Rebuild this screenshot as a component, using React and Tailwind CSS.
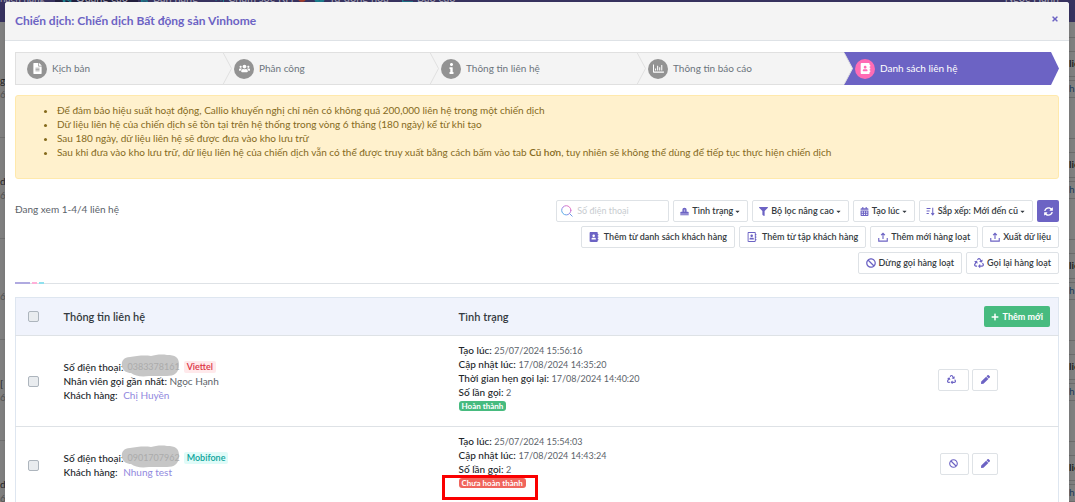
import React from 'react';
import clsx from 'clsx';
import {
    FaFileAlt, FaUsers, FaInfo, FaRegChartBar, FaAddressBook, FaRegAddressBook,
    FaFilter, FaCalendarAlt, FaSyncAlt, FaBan, FaRecycle, FaPen, FaPlus, FaTimes, FaCaretDown,
    FaBullhorn, FaShoppingCart, FaHeadset, FaCog, FaChartLine,
} from 'react-icons/fa';

const StampIcon = (props) => (
    <svg viewBox="0 0 16 16" width="1em" height="1em" fill="currentColor" {...props}>
        <path d="M8 1.500C5.800 1.500 4.300 2.800 4.300 5v3.500H2A1.500 1.500 0 0 0 .5 10v2h15v-2A1.500 1.500 0 0 0 14 8.500h-2.300V5C11.700 2.800 10.200 1.500 8 1.500zM.5 13h15v1.500H.5z" />
        <path d="M6.800 4.500h2.400v4H6.800z" fill="#fff" opacity=".5" />
    </svg>
);

const SortIcon = (props) => (
    <svg viewBox="0 0 16 16" width="1em" height="1em" fill="none" stroke="currentColor" strokeWidth="1.8" {...props}>
        <path d="M1 2.500h7M1 7h5.500M1 11.500h4M12 1.500v12M9.500 11L12 14l2.500-3" />
    </svg>
);

const TrayIcon = (props) => (
    <svg viewBox="0 0 16 16" width="1em" height="1em" fill="none" stroke="currentColor" strokeWidth="1.8" {...props}>
        <path d="M1.200 9.500v5h13.600v-5M8 11V2M5 5l3-3 3 3" />
    </svg>
);

const SearchIcon = (props) => (
    <svg viewBox="0 0 12 12" width="12" height="12" fill="none" strokeLinecap="round" {...props}>
        <defs>
            <linearGradient id="searchStroke" x1="1" y1="0" x2="0" y2="1">
                <stop offset="0" stopColor="#ff6fb7" />
                <stop offset=".5" stopColor="#a77be0" />
                <stop offset="1" stopColor="#2fc1ea" />
            </linearGradient>
        </defs>
        <circle cx="5.3" cy="5.3" r="4.6" stroke="url(#searchStroke)" />
        <path d="M8.800 8.800L11.200 11.200" stroke="#6f9be6" />
    </svg>
);

const steps = [
    { label: 'Kịch bản', icon: FaFileAlt },
    { label: 'Phân công', icon: FaUsers },
    { label: 'Thông tin liên hệ', icon: FaInfo },
    { label: 'Thông tin báo cáo', icon: FaRegChartBar },
    { label: 'Danh sách liên hệ', icon: FaAddressBook, active: true },
];

const contacts = [
    {
        id: 1,
        phone: '0383378161',
        network: 'Viettel',
        networkClass: 'bg-[#ffe9eb] text-[#dc3545]',
        agent: 'Ngọc Hạnh',
        customer: 'Chị Huyền',
        times: [
            ['Tạo lúc:', '25/07/2024 15:56:16'],
            ['Cập nhật lúc:', '17/08/2024 14:35:20'],
            ['Thời gian hẹn gọi lại:', '17/08/2024 14:40:20'],
            ['Số lần gọi:', '2'],
        ],
        done: true,
    },
    {
        id: 2,
        phone: '0901707962',
        network: 'Mobifone',
        networkClass: 'bg-[#e0fbf8] text-[#0ba39b]',
        customer: 'Nhung test',
        times: [
            ['Tạo lúc:', '25/07/2024 15:54:03'],
            ['Cập nhật lúc:', '17/08/2024 14:43:24'],
            ['Số lần gọi:', '2'],
        ],
        done: false,
    },
];

const Backdrop = () => (
    <div className="flex h-screen flex-col overflow-hidden bg-[#808080] text-[10px] text-[#222]" aria-hidden="true">
        <div className="flex h-[22px] shrink-0 items-start justify-between overflow-hidden bg-[#37325f] text-[11px] leading-3 text-[#a5a3b5]">
            <div className="-mt-[8px] flex whitespace-nowrap">
                <span className="w-[55px] text-[10px]">hách hàng</span>
                <span className="flex w-[83px] items-center gap-1 bg-[#221f3d] pl-1.5"><FaBullhorn className="text-[#1c7d8c]" />Quảng cáo</span>
                <span className="flex w-[75px] items-center gap-1"><FaShoppingCart className="text-[#1c7d8c]" />Bán hàng</span>
                <span className="flex w-[101px] items-center gap-1"><FaHeadset className="text-[#1c7d8c]" />Chăm sóc KH <i className="size-2 rounded-full bg-[#a03c2c]" /></span>
                <span className="flex w-[88px] items-center gap-1"><FaCog className="text-[#1c7d8c]" />Tự động hóa</span>
                <span className="flex items-center gap-1"><FaChartLine className="text-[#1c7d8c]" />Báo cáo</span>
            </div>
            <span className="-mt-[8px] mr-4">Ngọc Hạnh</span>
        </div>
        <div className="flex justify-between">
            <div className="w-[5px] overflow-hidden pt-[15px]">
                {['g', 'd', '', '[', 'd'].map((letter, i) => (
                    <div key={i} className="flex h-[101px] flex-col justify-center border-b border-[#707070] leading-[14px]">
                        <span className="h-[14px]">{letter}</span>
                        <span className="text-[#555]">6</span>
                    </div>
                ))}
            </div>
            <div className="w-[6px] overflow-hidden">
                {[0, 1, 2, 3, 4].map(i => (
                    <div key={i} className="h-[101px] pt-[15px]">
                        <div className="h-[15px] border-y border-[#6c6c6c]" />
                        <div className="h-[25px] border-b border-[#6c6c6c] pt-1 font-bold leading-[14px]">liê</div>
                        <div className="mt-[3px] h-[18px] border-y border-[#6c6c6c] leading-[14px] text-[#1f3a5c]">h</div>
                    </div>
                ))}
            </div>
        </div>
    </div>
);

const Step = ({ step }) => {
    const Icon = step.icon;
    return (
        <li className={clsx('relative h-[33px]', step.active ? 'grow basis-[8px]' : 'grow basis-0')}>
            <a
                href="#"
                className={clsx(
                    'flex h-full items-center gap-[5px] pl-[11px]',
                    step.active
                        ? 'bg-[#6c63c4] text-white [clip-path:polygon(0_0,calc(100%-8px)_0,100%_50%,calc(100%-8px)_100%,0_100%)]'
                        : 'border-y border-[#e0e0e0] bg-[#f4f4f4] text-[#6c757d]',
                )}
            >
                <span className={clsx('flex size-5 items-center justify-center rounded-full text-[11px] text-white', step.active ? 'bg-[#ff6cb5]' : 'bg-[#939393]')}>
                    <Icon />
                </span>
                <span className="pb-[2px]">{step.label}</span>
            </a>
            {!step.active && (
                <svg viewBox="0 0 9 33" width="9" height="33" fill="#f4f4f4" stroke="#e0e0e0" className="absolute -right-[9px] top-0 z-10">
                    <path d="M0 0.500L8.500 16.500L0 32.500" />
                </svg>
            )}
        </li>
    );
};

const Btn = ({ icon: Icon, children, caret, wide }) => (
    <button
        type="button"
        className={clsx(
            'flex h-[22px] items-center rounded-[2px] border border-[#dee2e6] bg-white text-[9px] font-semibold text-[#343a40]',
            wide ? 'gap-[5px] px-[7px]' : caret ? 'gap-[3px] px-[6px]' : 'gap-[3px] px-[7px]',
        )}
    >
        <Icon className={clsx('text-[#6c63c4]', caret ? 'size-[9px]' : 'size-[10px]')} />
        <span>{children}</span>
        {caret && <FaCaretDown className="-ml-[2px] size-[7px]" />}
    </button>
);

const Check = ({ label }) => (
    <input type="checkbox" aria-label={label} className="block size-[11px] appearance-none rounded-[2px] border border-[#adb5bd] bg-[#e9ecef] checked:bg-[#6c63c4]" />
);

const IconBtn = ({ icon: Icon, label, className }) => (
    <button type="button" aria-label={label} className={clsx('flex h-[22px] items-center rounded-[2px] border border-[#dee2e6] bg-white pl-[8px]', className)}>
        <Icon className="size-[9px] text-[#6c63c4]" />
    </button>
);

const Phone = ({ children }) => (
    <span className="relative inline-block px-[4px] text-[9px] text-[#ababab]">
        <svg viewBox="0 0 60 24" width="60" height="24" className="absolute -left-[2px] -top-[6px]">
            <path d="M9 3C3 3 0 7 1 12c1 5 5 7 9 7 4 3 10 4 18 3h18c7 0 12-3 12-11S54 1 46 1c-6-1-12 0-16 1C23 1 15 2 9 3z" fill="#c6c6c6" />
        </svg>
        <span className="relative">{children}</span>
    </span>
);

const Term = ({ children }) => <b className="font-medium text-[#212529]">{children}</b>;

const ContactRow = ({ contact }) => (
    <tr className="border-b border-[#dee2e6]">
        <td className="pl-3"><Check label={`Chọn ${contact.customer}`} /></td>
        <td className="pb-px">
            <div className="flex h-[14px] items-center">
                <Term>Số điện thoại:</Term>
                <Phone>{contact.phone}</Phone>
                <span className={clsx('rounded-[2px] px-[3px] py-px text-[9px] font-semibold leading-[10px]', contact.networkClass)}>{contact.network}</span>
            </div>
            {contact.agent && <div><Term>Nhân viên gọi gần nhất:</Term> {contact.agent}</div>}
            <div><Term>Khách hàng:</Term> <a href="#" className="ml-[3px] text-[#9189de]">{contact.customer}</a></div>
        </td>
        <td className="relative pb-[13px] pt-[7px]">
            {contact.times.map(([name, value]) => (
                <div key={name} className="h-[14px]"><Term>{name}</Term> <span className="text-[9px]">{value}</span></div>
            ))}
            <div className="flex h-[14px] items-center">
                <span className={clsx('rounded-[3px] px-[3px] text-[8px] font-bold leading-[10px] text-white', contact.done ? 'bg-[#47bb7f]' : 'bg-[#f0655c]')}>
                    {contact.done ? 'Hoàn thành' : 'Chưa hoàn thành'}
                </span>
            </div>
            {!contact.done && <div className="absolute -left-[17px] bottom-[3px] h-[25px] w-[96px] border-3 border-[#fb0000]" />}
        </td>
        <td className="pb-[3px]">
            <div className="flex justify-end gap-[3px] pr-[60px]">
                <IconBtn icon={contact.done ? FaRecycle : FaBan} label={contact.done ? 'Gọi lại' : 'Dừng gọi'} className={contact.done ? 'w-[31px]' : 'w-[29px]'} />
                <IconBtn icon={FaPen} label="Sửa" className="w-[26px]" />
            </div>
        </td>
    </tr>
);

const App = () => (
    <div className="relative h-screen overflow-hidden font-['Lato',Roboto,sans-serif]">
        <Backdrop />
        <div role="dialog" aria-label="Chiến dịch" className="absolute inset-x-0 bottom-0 top-[2px] ml-[5px] mr-[6px] overflow-hidden rounded-t-[3px] bg-white text-[10px] leading-[14px] text-[#5c636a] shadow-md">
            <header className="flex h-[39px] items-center justify-between border-b border-[#dee2e6] bg-[#f4f4f4] px-2.5 text-[#6c63c4]">
                <h1 className="text-xs font-bold">Chiến dịch: Chiến dịch Bất động sản Vinhome</h1>
                <button type="button" aria-label="Đóng" className="pb-1"><FaTimes className="size-2" /></button>
            </header>

            <div className="px-2.5 pt-[11px]">
                <ol className="flex border-l border-[#e0e0e0]">
                    {steps.map(step => <Step key={step.label} step={step} />)}
                </ol>

                <div className="mt-2.5 h-[84px] rounded-[3px] border border-[#ffe9ac] bg-[#fff1cd] pt-[7px] text-[#856a1c]">
                    <ul className="list-disc pl-[41px]">
                        <li>Để đảm bảo hiệu suất hoạt động, Callio khuyến nghị chỉ nên có không quá 200,000 liên hệ trong một chiến dịch</li>
                        <li>Dữ liệu liên hệ của chiến dịch sẽ tồn tại trên hệ thống trong vòng 6 tháng (180 ngày) kể từ khi tạo</li>
                        <li>Sau 180 ngày, dữ liệu liên hệ sẽ được đưa vào kho lưu trữ</li>
                        <li>Sau khi đưa vào kho lưu trữ, dữ liệu liên hệ của chiến dịch vẫn có thể được truy xuất bằng cách bấm vào tab <b className="font-semibold">Cũ hơn</b>, tuy nhiên sẽ không thể dùng để tiếp tục thực hiện chiến dịch</li>
                    </ul>
                </div>

                <div className="mt-[21px] flex justify-between">
                    <p className="mt-[2px]">Đang xem 1-4/4 liên hệ</p>
                    <div className="flex flex-col items-end gap-1">
                        <div className="flex gap-1">
                            <label className="flex h-[22px] w-[113px] items-center gap-1 rounded-[2px] border border-[#dee2e6] pl-1">
                                <SearchIcon className="shrink-0" />
                                <input type="text" aria-label="Số điện thoại" placeholder="Số điện thoại" className="w-full text-[9px] outline-none placeholder:text-[#c8ccd0]" />
                            </label>
                            <Btn icon={StampIcon} caret>Tình trạng</Btn>
                            <Btn icon={FaFilter} caret>Bộ lọc nâng cao</Btn>
                            <Btn icon={FaCalendarAlt} caret>Tạo lúc</Btn>
                            <Btn icon={SortIcon} caret>Sắp xếp: Mới đến cũ</Btn>
                            <button type="button" aria-label="Tải lại" className="flex size-[22px] items-center justify-center rounded-[2px] bg-[#6c63c4] text-white"><FaSyncAlt className="size-[9px]" /></button>
                        </div>
                        <div className="flex gap-1">
                            <Btn icon={FaAddressBook} wide>Thêm từ danh sách khách hàng</Btn>
                            <Btn icon={FaRegAddressBook} wide>Thêm từ tập khách hàng</Btn>
                            <Btn icon={TrayIcon}>Thêm mới hàng loạt</Btn>
                            <Btn icon={TrayIcon}>Xuất dữ liệu</Btn>
                        </div>
                        <div className="flex gap-1">
                            <Btn icon={FaBan}>Dừng gọi hàng loạt</Btn>
                            <Btn icon={FaRecycle}>Gọi lại hàng loạt</Btn>
                        </div>
                    </div>
                </div>

                <div className="mt-2 flex h-[2px] gap-[2px] border-b border-[#dee2e6]">
                    <i className="h-[2px] w-[15px] bg-[#b0aae0]" />
                    <i className="h-[2px] w-[5px] bg-[#ffb0d8]" />
                    <i className="h-[2px] w-[5px] bg-[#8fe0ee]" />
                </div>

                <table className="mt-[13px] w-full table-fixed border-collapse border border-[#dee6f0]">
                    <thead>
                        <tr className="h-[38px] border-b border-[#dee2e6] bg-[#f0f3fc] text-left text-[11px] text-[#343a40]">
                            <th className="w-[48px] pl-3"><Check label="Chọn tất cả" /></th>
                            <th className="w-[395px] font-semibold">Thông tin liên hệ</th>
                            <th className="font-semibold">Tình trạng</th>
                            <th className="pr-2">
                                <button type="button" className="ml-auto flex h-[21px] items-center gap-1 rounded-[2px] bg-[#47bb7f] px-[7px] text-[9px] font-bold text-white"><FaPlus className="size-2" />Thêm mới</button>
                            </th>
                        </tr>
                    </thead>
                    <tbody>
                        {contacts.map(contact => <ContactRow key={contact.id} contact={contact} />)}
                    </tbody>
                </table>
            </div>
        </div>
    </div>
);

export default App;
